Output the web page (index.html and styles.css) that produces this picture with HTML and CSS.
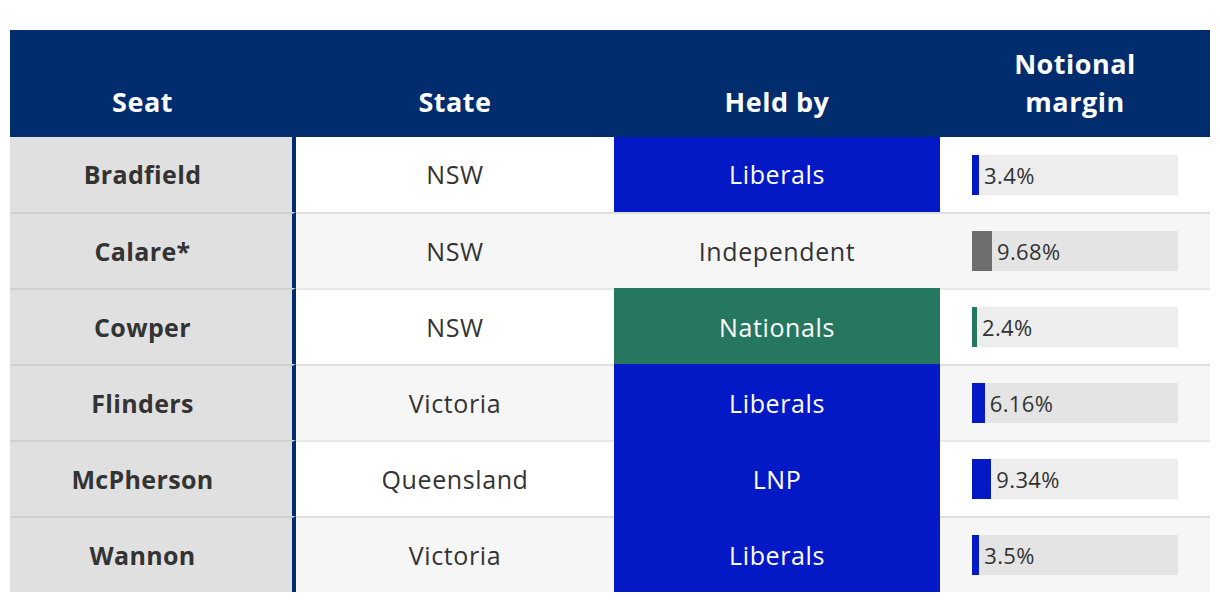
FILE: index.html
```html
<!DOCTYPE html>
<html lang="en">
<head>
<meta charset="utf-8">
<title>Notional margins</title>
<link rel="stylesheet" href="styles.css">
</head>
<body>
<div class="table" role="table">
  <div class="head" role="row">
    <div class="hc seat" role="columnheader">Seat</div>
    <div class="hc" role="columnheader">State</div>
    <div class="hc" role="columnheader">Held by</div>
    <div class="hc" role="columnheader">Notional<br>margin</div>
  </div>
  <div class="row odd" role="row">
    <div class="c seat">Bradfield</div>
    <div class="c">NSW</div>
    <div class="c party lib">Liberals</div>
    <div class="c margin"><div class="track"><span class="fill lib" style="width:3.4%"></span><span class="val">3.4%</span></div></div>
  </div>
  <div class="row even" role="row">
    <div class="c seat">Calare*</div>
    <div class="c">NSW</div>
    <div class="c party ind">Independent</div>
    <div class="c margin"><div class="track"><span class="fill ind" style="width:9.68%"></span><span class="val">9.68%</span></div></div>
  </div>
  <div class="row odd" role="row">
    <div class="c seat">Cowper</div>
    <div class="c">NSW</div>
    <div class="c party nat">Nationals</div>
    <div class="c margin"><div class="track"><span class="fill nat" style="width:2.4%"></span><span class="val">2.4%</span></div></div>
  </div>
  <div class="row even" role="row">
    <div class="c seat">Flinders</div>
    <div class="c">Victoria</div>
    <div class="c party lib">Liberals</div>
    <div class="c margin"><div class="track"><span class="fill lib" style="width:6.16%"></span><span class="val">6.16%</span></div></div>
  </div>
  <div class="row odd" role="row">
    <div class="c seat">McPherson</div>
    <div class="c">Queensland</div>
    <div class="c party lib">LNP</div>
    <div class="c margin"><div class="track"><span class="fill lib" style="width:9.34%"></span><span class="val">9.34%</span></div></div>
  </div>
  <div class="row even" role="row">
    <div class="c seat">Wannon</div>
    <div class="c">Victoria</div>
    <div class="c party lib">Liberals</div>
    <div class="c margin"><div class="track"><span class="fill lib" style="width:3.5%"></span><span class="val">3.5%</span></div></div>
  </div>
</div>
</body>
</html>
```

FILE: styles.css
```css
* { box-sizing: border-box; }
html, body { margin: 0; padding: 0; background: #fff; }
body {
  padding: 30px 10px 10px 10px;
  font-family: "Open Sans", "Liberation Sans", sans-serif;
  color: #333;
}
.table { width: 1200px; }
.head, .row {
  display: grid;
  grid-template-columns: 286px 318px 326px 270px;
}
.head {
  height: 107px;
  background: #012c6d;
  color: #fff;
}
.hc {
  display: flex;
  align-items: flex-end;
  justify-content: center;
  text-align: center;
  font-size: 27px;
  font-weight: 700;
  line-height: 38px;
  letter-spacing: 0.5px;
  padding-bottom: 16px;
}
.hc.seat { padding-right: 21px; }
.row { height: 76px; }
.head + .row { height: 75px; }
.row.odd { background: #fff; }
.row.even { background: #f6f6f6; }
.c {
  display: flex;
  align-items: center;
  justify-content: center;
  font-size: 25px;
  letter-spacing: 0.6px;
  padding-bottom: 1px;
  border-top: 2px solid rgba(0, 0, 0, 0.09);
}
.head + .row .c { border-top: 0; }
.c.seat {
  background: #e0e0e0;
  font-weight: 700;
  letter-spacing: 0.35px;
  border-right: 4px solid #012c6d;
  padding-right: 17px;
  border-top-color: rgba(0, 0, 0, 0.07);
}
.party.lib { background: #0419c6; color: #fff; border-top-color: transparent; }
.party.nat { background: #257760; color: #fff; border-top-color: transparent; }
.c.margin { padding: 0 32px; }
.track {
  width: 206px;
  height: 40px;
  background: rgba(0, 0, 0, 0.07);
  display: flex;
  align-items: center;
}
.fill { height: 40px; flex: none; }
.fill.lib { background: #0419c6; }
.fill.ind { background: #6e6e6e; }
.fill.nat { background: #257760; }
.val { font-size: 22px; letter-spacing: 0.4px; padding-left: 5px; color: #333; }
```
